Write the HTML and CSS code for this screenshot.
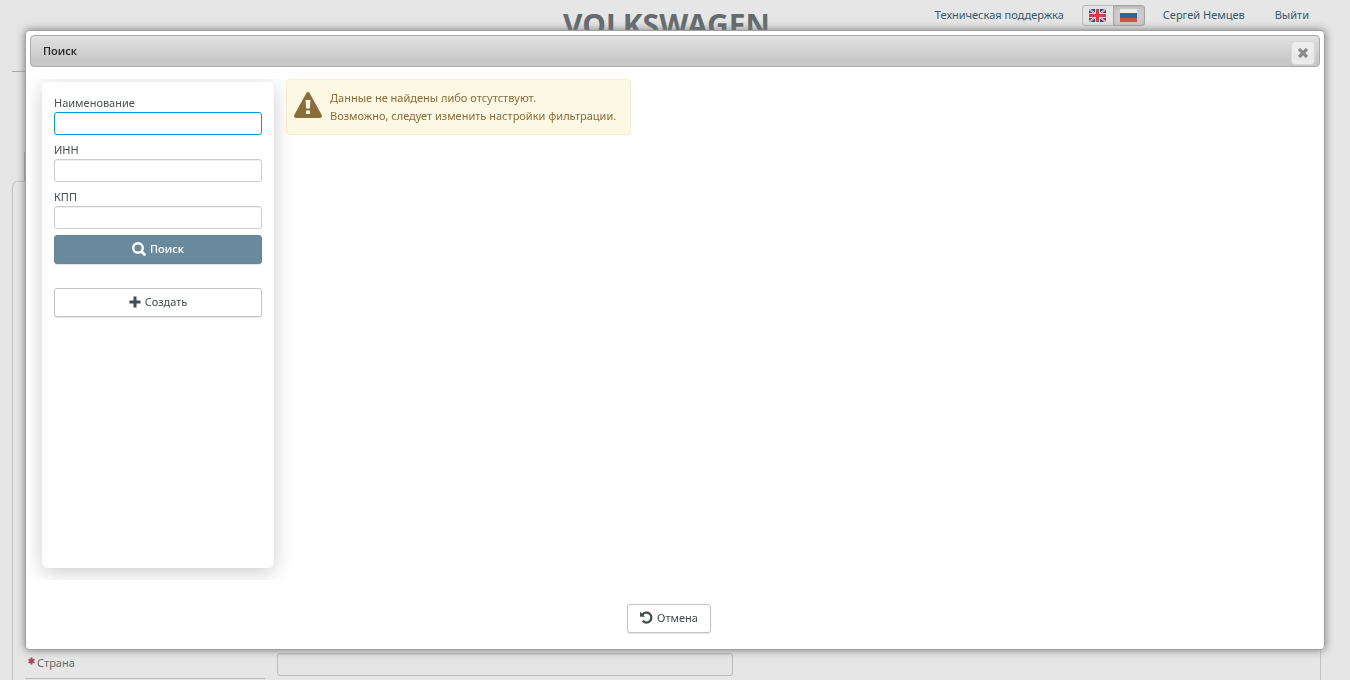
FILE: index.html
```html
<!DOCTYPE html>
<html lang="ru">
<head>
<meta charset="utf-8">
<meta name="viewport" content="width=device-width, initial-scale=1">
<title>Поиск</title>
<link rel="stylesheet" href="styles.css">
</head>
<body>
<div class="page">
  <header class="header">
    <div class="brand">VOLKSWAGEN</div>
    <nav class="topnav">
      <a class="toplink" href="#">Техническая поддержка</a>
      <div class="langs">
        <button class="lang" type="button" aria-label="English">
          <svg width="17" height="13" viewBox="0 0 17 13" aria-hidden="true">
            <path fill="#3c3f82" d="M0 0h17v13H0z"/>
            <path stroke="#dcd6e0" stroke-width="2" d="M0 0l17 13M17 0L0 13"/>
            <path stroke="#cf6b78" stroke-width=".7" d="M0 0l17 13M17 0L0 13"/>
            <path fill="#e0cdd6" d="M6 0h5v13H6zM0 4h17v5H0z"/>
            <path fill="#cc4048" d="M7 0h3v13H7zM0 5h17v3H0z"/>
          </svg>
        </button>
        <button class="lang lang-active" type="button" aria-label="Русский">
          <svg width="17" height="13" viewBox="0 0 17 13" aria-hidden="true">
            <path fill="#ebebeb" d="M0 0h17v4H0z"/>
            <path fill="#3a5cab" d="M0 4h17v5H0z"/>
            <path fill="#cf5046" d="M0 9h17v4H0z"/>
          </svg>
        </button>
      </div>
      <a class="toplink user" href="#">Сергей Немцев</a>
      <a class="toplink" href="#">Выйти</a>
    </nav>
  </header>
  <div class="tabs"><div class="tab"></div></div>
  <main class="panel">
    <div class="row">
      <label class="row-label" for="country">
        <svg width="7" height="8" viewBox="0 0 8 8" aria-hidden="true"><path stroke="#a5455c" stroke-width="2.2" d="M4 0v8M.6 2l6.8 4M7.4 2L.6 6"/></svg>
        Страна
      </label>
      <input class="field row-field" id="country" type="text">
    </div>
  </main>
</div>

<section class="dialog" role="dialog" aria-labelledby="dialog-title">
  <div class="titlebar">
    <h1 class="title" id="dialog-title">Поиск</h1>
    <button class="close" type="button" aria-label="Закрыть">
      <svg width="10" height="10" viewBox="0 0 10 10" aria-hidden="true"><path stroke="#888" stroke-width="3.2" d="M1 1l8 8M9 1L1 9"/></svg>
    </button>
  </div>
  <div class="content">
    <form class="card">
      <label class="label" for="name">Наименование</label>
      <input class="field field-focus" id="name" type="text">
      <label class="label" for="inn">ИНН</label>
      <input class="field" id="inn" type="text">
      <label class="label" for="kpp">КПП</label>
      <input class="field" id="kpp" type="text">
      <button class="btn btn-primary" type="button">
        <svg width="14" height="14" viewBox="0 0 14 14" aria-hidden="true"><circle cx="6" cy="6" r="4.8" fill="none" stroke="currentColor" stroke-width="2.4"/><path stroke="currentColor" stroke-width="2.8" stroke-linecap="round" d="M9.8 9.800l2.600 2.600"/></svg>
        Поиск
      </button>
      <button class="btn btn-create" type="button">
        <svg width="12" height="12" viewBox="0 0 12 12" aria-hidden="true"><path fill="currentColor" d="M4.500.5h3v4h4v3h-4v4h-3v-4h-4v-3h4z"/></svg>
        Создать
      </button>
    </form>
    <div class="alert" role="alert">
      <svg width="28" height="26" viewBox="0 0 28 26" aria-hidden="true"><path fill="#8a6d3b" fill-rule="evenodd" d="M12.400.9Q14-.9 15.600.9L27.700 23Q28.600 26 26 26H2Q-.6 26 .3 23zM11.600 8l.5 8.500h3.800l.5-8.500zM12 18.500v3.500h4v-3.500z"/></svg>
      <p class="alert-text">Данные не найдены либо отсутствуют.<br>Возможно, следует изменить настройки фильтрации.</p>
    </div>
  </div>
  <footer class="footer">
    <button class="btn" type="button">
      <svg width="13" height="13" viewBox="0 0 13 13" aria-hidden="true"><path fill="none" stroke="currentColor" stroke-width="2.200" d="M2.200 3.800A5 5 0 1 1 2.600 9.800"/><path fill="currentColor" d="M0 .8v5h5z"/></svg>
      Отмена
    </button>
  </footer>
</section>
</body>
</html>
```
FILE: styles.css
```css
* { box-sizing: border-box; }

body {
  margin: 0;
  background: #e6e6e6;
  color: #4a5055;
  font: 11px/18px "Noto Sans", "Open Sans", sans-serif;
}

button, input { font: inherit; color: inherit; }

svg { display: block; flex: none; }

.page {
  display: flex;
  flex-direction: column;
  height: 100vh;
  padding: 0 29px 0 12px;
  overflow: hidden;
}

.header {
  display: grid;
  grid-template-columns: 1fr auto 1fr;
  flex: none;
  height: 72px;
  border-bottom: 1px solid #aaa;
}

.brand {
  grid-column: 2;
  padding-top: 7px;
  color: #646b6e;
  font: bold 30px/36px "Noto Sans", sans-serif;
}

.topnav {
  display: flex;
  align-items: center;
  justify-self: end;
  height: 30px;
  padding-right: 12px;
  white-space: nowrap;
}

.toplink { color: #36586c; text-decoration: none; }

.user { margin-right: 30px; }

.langs { display: flex; margin: 0 18px; }

.lang {
  display: flex;
  align-items: center;
  justify-content: center;
  width: 32px;
  height: 21px;
  padding: 0;
  border: 1px solid #b9b9b9;
  border-radius: 3px 0 0 3px;
  background: #e4e4e4;
}

.lang-active {
  margin-left: -1px;
  border-color: #a5a5a5;
  border-radius: 0 3px 3px 0;
  background: #cbcbcb;
  box-shadow: inset 0 2px 3px #bababa;
}

.tabs { flex: none; height: 109px; padding: 78px 12px 0; }

.tab { height: 31px; border: 1px solid #aaa; border-bottom: 0; border-radius: 4px 4px 0 0; }

.panel {
  display: flex;
  flex: 1;
  align-items: flex-end;
  padding: 0 12px 1px;
  border: 1px solid #c2c2c2;
  border-bottom: 0;
  border-radius: 6px 6px 0 0;
}

.row {
  display: grid;
  grid-template-columns: 240px 456px;
  gap: 12px;
  height: 26px;
}

.row-label {
  display: flex;
  gap: 2px;
  padding: 1px 3px 0;
  border-bottom: 1px solid #bbb;
  color: #686b6d;
}

.row-label svg { margin-top: 3px; }

.field {
  display: block;
  width: 100%;
  height: 23px;
  padding: 2px 6px;
  border: 1px solid #ccc;
  border-radius: 3px;
  outline: 0;
  background: #fff;
  box-shadow: inset 0 1px 1px #eee;
}

.field-focus { border-color: #0099da; }

.row-field { border-color: #bbb; background: #e4e4e4; box-shadow: inset 0 1px 1px #d8d8d8; }

.dialog {
  position: fixed;
  inset: 30px 25px;
  display: flex;
  flex-direction: column;
  padding: 4px;
  border: 1px solid #a3a3a3;
  border-radius: 4px;
  background: #fff;
  box-shadow: 0 0 8px #777;
}

.titlebar {
  display: flex;
  align-items: center;
  justify-content: space-between;
  flex: none;
  height: 32px;
  padding: 4px 4px 0 12px;
  border: 1px solid #aaa;
  border-radius: 4px;
  background: linear-gradient(#e2e2e2, #c9c9c9 75%);
}

.title {
  margin: 0 0 4px;
  color: #222;
  font: 600 11px/18px "Open Sans", "Noto Sans", sans-serif;
}

.close {
  display: grid;
  place-items: center;
  width: 24px;
  height: 24px;
  padding: 0;
  border: 1px solid #d8d8d8;
  border-radius: 4px;
  background: linear-gradient(#ededed 50%, #e6e6e6 50%, #eee);
}

.content {
  display: flex;
  flex: 1;
  gap: 12px;
  align-items: flex-start;
  min-height: 0;
  margin-top: 12px;
  padding: 0 12px;
  overflow: hidden;
}

.card {
  align-self: stretch;
  flex: none;
  width: 232px;
  margin: 3px 0 12px;
  padding: 12px;
  border-radius: 6px;
  background: #fff;
  box-shadow: 0 4px 20px #ccc;
}

.label { display: block; }

.card .field { margin-bottom: 6px; }

.btn {
  display: flex;
  align-items: center;
  justify-content: center;
  gap: 4px;
  height: 29px;
  padding: 0 12px 2px;
  border: 1px solid #c4c4c4;
  border-radius: 3px;
  background: #fff;
  box-shadow: 0 1px 1px #e4e4e4;
  color: #414b50;
}

.card .btn { width: 100%; }

.btn-primary {
  border-color: #66879a;
  background: #69899c;
  color: #fff;
  font: 600 11px/18px "Open Sans", "Noto Sans", sans-serif;
}

.btn-create { margin-top: 24px; }

.alert {
  display: flex;
  align-items: flex-start;
  gap: 8px;
  min-height: 56px;
  padding: 9px 14px 9px 7px;
  border: 1px solid #faebcc;
  border-radius: 4px;
  background: #fcf8e3;
  color: #8a6d3b;
}

.alert svg { margin-top: 3px; }

.alert-text { margin: 0; }

.footer {
  display: flex;
  justify-content: center;
  flex: none;
  padding: 24px 24px 12px 12px;
}
```
